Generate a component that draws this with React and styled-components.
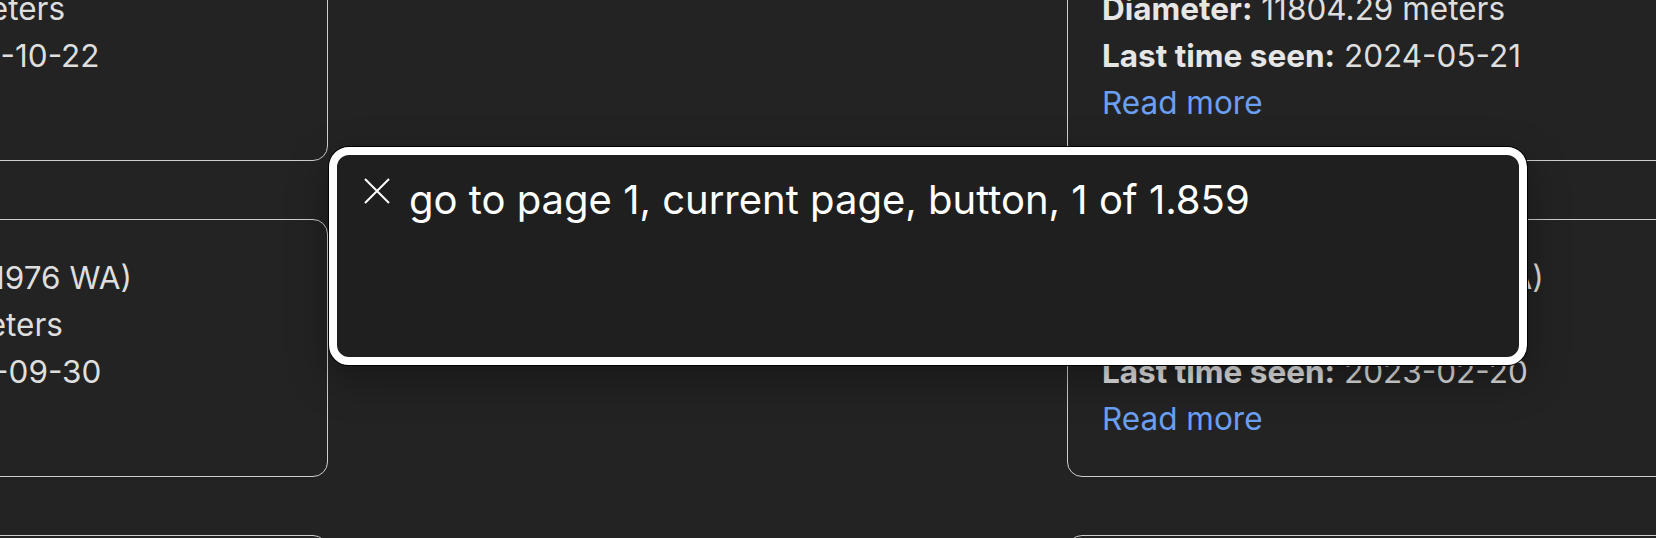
import styled, { createGlobalStyle } from "styled-components";

const GlobalStyle = createGlobalStyle`
  html, body {
    margin: 0;
    padding: 0;
    background: #232323;
    overflow: hidden;
  }
  body {
    font-family: Inter, "Noto Sans", "Liberation Sans", sans-serif;
    color: #dedede;
  }
`;

const Page = styled.div`
  position: relative;
  width: 1656px;
  height: 538px;
  overflow: hidden;
`;

const CardGrid = styled.div`
  display: grid;
  grid-template-columns: 682px 682px;
  column-gap: 739px;
  row-gap: 58px;
  margin-left: -354px;
  margin-top: -97px;
`;

const Card = styled.article`
  box-sizing: border-box;
  border: 1.5px solid #cfcfcf;
  border-radius: 15px;
  padding: 34px 35px 34px 34px;
  font-size: 31.5px;
  line-height: 47px;
  white-space: nowrap;
`;

const Line = styled.p`
  margin: 0;
  color: #dedede;

  strong {
    font-weight: 700;
    color: #e6e6e6;
  }
`;

const ReadMore = styled.a`
  display: block;
  color: #6b9ff2;
  text-decoration: none;
  cursor: pointer;
`;

const Caption = styled.div`
  position: absolute;
  left: 329px;
  top: 147px;
  width: 1198px;
  height: 218px;
  box-sizing: border-box;
  border: 8px solid #ffffff;
  border-radius: 20px;
  background: #1f1f1f;
  box-shadow: 0 0 0 1px #000, 0 14px 40px rgba(0, 0, 0, 0.35);
  display: flex;
  align-items: flex-start;
  gap: 19px;
  padding: 20px 27px;
`;

const CloseButton = styled.button`
  flex: none;
  width: 26px;
  height: 26px;
  margin-top: 3px;
  padding: 0;
  border: 0;
  background: none;
  cursor: pointer;

  svg {
    display: block;
  }
`;

const CaptionText = styled.p`
  margin: 0;
  color: #ffffff;
  font-size: 40px;
  line-height: 50px;
  white-space: nowrap;
`;

const asteroids = [
  { name: "2212 Hephaistos (1978 SB)", diameter: "5376.18", seen: "2022-10-22" },
  { name: "4183 Cuno (1959 LM)", diameter: "11804.29", seen: "2024-05-21" },
  { name: "4862 Apollo (1976 WA)", diameter: "1481.37", seen: "2021-09-30" },
  { name: "2101 Adonis (1936 CA)", diameter: "5100.84", seen: "2023-02-20" },
  { name: "1620 Geographos (1951 RA)", diameter: "2561.10", seen: "2021-08-14" },
  { name: "1866 Sisyphus (1972 XA)", diameter: "8480.05", seen: "2022-12-03" },
];

const AsteroidCard = ({ name, diameter, seen }) => (
  <Card>
    <Line>
      <strong>Name:</strong> {name}
    </Line>
    <Line>
      <strong>Diameter:</strong> {diameter} meters
    </Line>
    <Line>
      <strong>Last time seen:</strong> {seen}
    </Line>
    <ReadMore>Read more</ReadMore>
  </Card>
);

export default function App() {
  return (
    <Page>
      <GlobalStyle />
      <CardGrid>
        {asteroids.map((item) => (
          <AsteroidCard key={item.name} {...item} />
        ))}
      </CardGrid>
      <Caption>
        <CloseButton aria-label="close">
          <svg width="26" height="26" viewBox="0 0 26 26" fill="none">
            <path d="M1 1 L25 25 M25 1 L1 25" stroke="#ffffff" strokeWidth="2" />
          </svg>
        </CloseButton>
        <CaptionText>go to page 1, current page, button, 1 of 1.859</CaptionText>
      </Caption>
    </Page>
  );
}
